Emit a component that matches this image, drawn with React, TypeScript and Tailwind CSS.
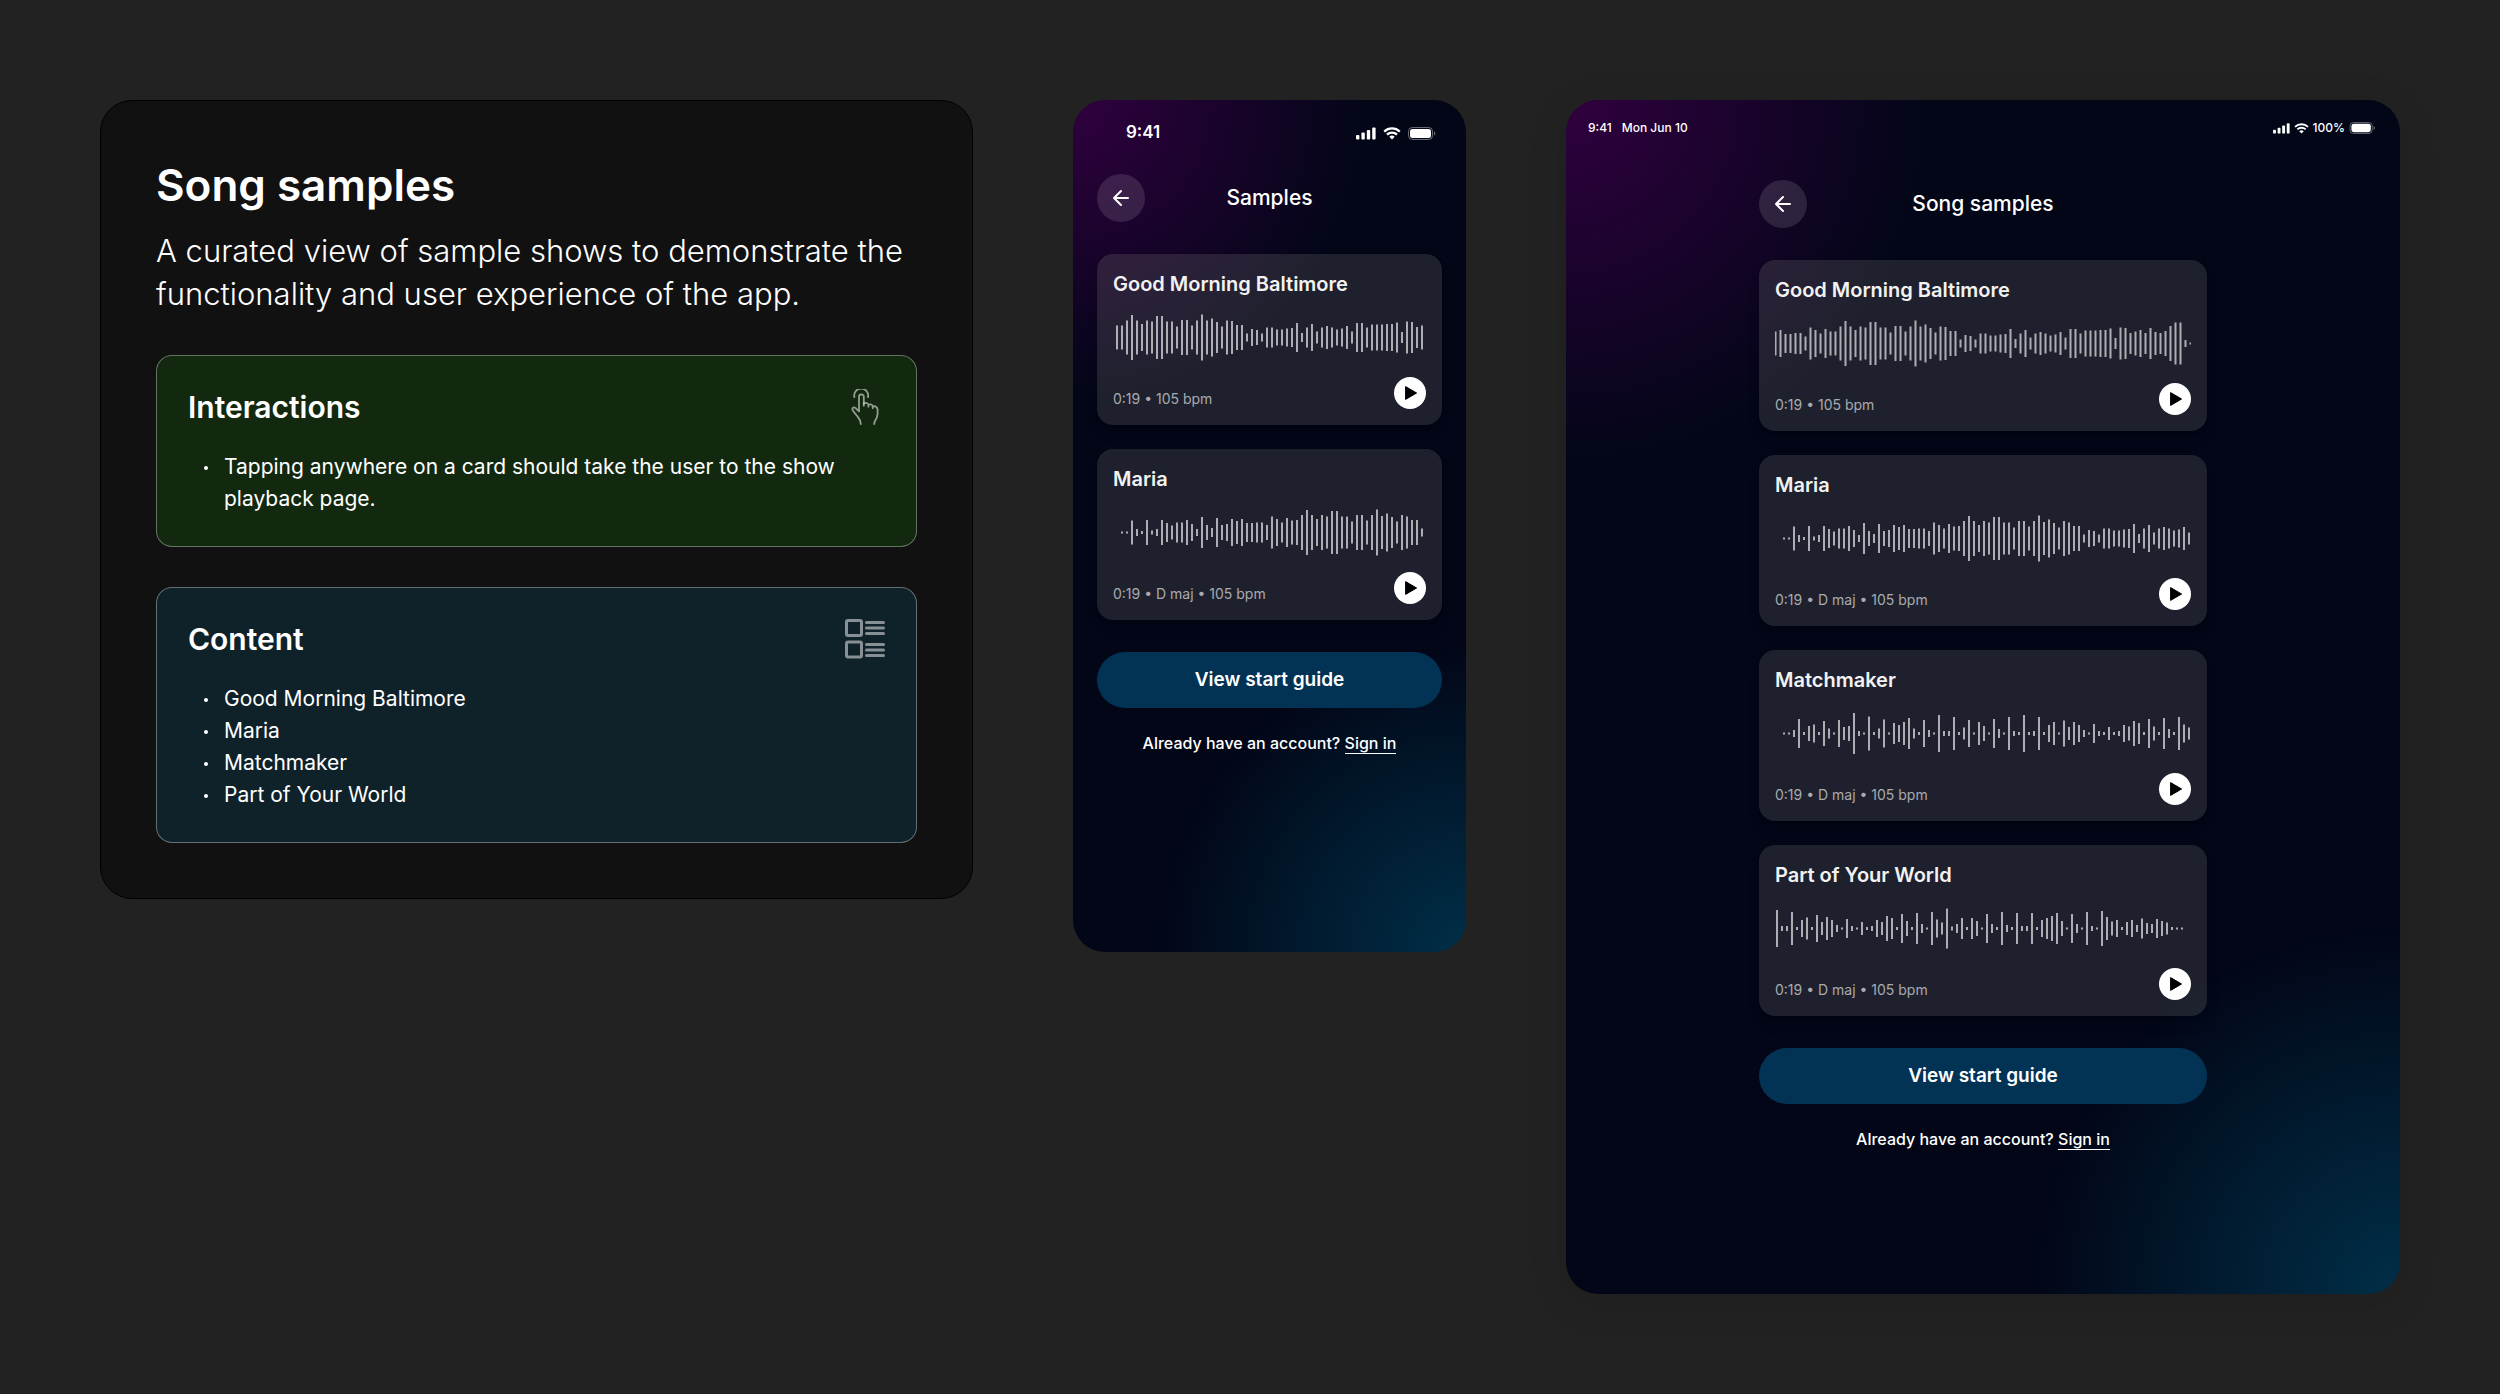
import React from "react";

const songs = [
  {
    title: "Good Morning Baltimore",
    meta: "0:19 • 105 bpm",
    start: 0.5,
    bars: [
      24, 27, 19, 19, 21, 21, 14, 32, 27, 20, 29, 24, 24, 34, 45, 34, 27, 34,
      32, 43, 43, 32, 32, 22, 35, 35, 24, 34, 46, 34, 38, 31, 22, 34, 33, 25,
      25, 8, 17, 15, 8, 20, 20, 16, 16, 18, 19, 29, 9, 20, 27, 12, 20, 23, 20,
      16, 18, 23, 12, 29, 29, 20, 26, 26, 26, 27, 27, 30, 11, 32, 31, 21, 24,
      27, 21, 31, 23, 21, 25, 35, 42, 42, 7, 2,
    ],
  },
  {
    title: "Maria",
    meta: "0:19 • D maj • 105 bpm",
    start: 9,
    bars: [
      2, 2, 24, 7, 3, 25, 4, 7, 25, 19, 14, 20, 20, 25, 17, 7, 31, 15, 9, 29,
      15, 17, 27, 23, 27, 19, 19, 20, 20, 15, 32, 27, 20, 29, 24, 25, 35, 45,
      35, 27, 35, 32, 43, 43, 32, 32, 22, 35, 35, 24, 35, 46, 33, 38, 31, 22,
      35, 32, 25, 25, 8, 17, 15, 8, 20, 20, 16, 16, 18, 19, 29, 9, 20, 27, 12,
      20, 23, 20, 16, 18, 23, 12,
    ],
  },
  {
    title: "Matchmaker",
    meta: "0:19 • D maj • 105 bpm",
    start: 9,
    bars: [
      2, 2, 7, 29, 3, 15, 18, 3, 25, 10, 2, 27, 13, 15, 41, 5, 2, 34, 3, 10,
      28, 2, 21, 17, 23, 31, 10, 3, 27, 7, 2, 37, 5, 5, 33, 3, 12, 27, 2, 23,
      15, 2, 29, 9, 2, 33, 5, 3, 37, 3, 5, 33, 3, 17, 23, 2, 26, 13, 23, 17, 7,
      2, 19, 5, 3, 13, 3, 5, 17, 14, 25, 21, 3, 29, 14, 3, 31, 9, 3, 33, 18, 12,
    ],
  },
  {
    title: "Part of Your World",
    meta: "0:19 • D maj • 105 bpm",
    start: 2,
    bars: [
      37, 5, 5, 33, 3, 17, 22, 3, 27, 13, 23, 17, 7, 2, 19, 5, 2, 13, 3, 5, 17,
      13, 25, 21, 3, 29, 15, 3, 31, 9, 2, 33, 18, 12, 40, 4, 9, 21, 3, 21, 15,
      2, 29, 9, 3, 33, 7, 3, 31, 5, 5, 31, 3, 17, 21, 25, 31, 15, 2, 29, 9, 2,
      33, 5, 2, 35, 23, 14, 17, 3, 13, 17, 7, 20, 11, 9, 19, 15, 12, 3, 2, 2,
    ],
  },
];

// the phone is narrower, so its first clip starts a little later
const phoneSongs = [
  { ...songs[0], start: 4, bars: songs[0].bars.slice(11, 73) },
  songs[1],
];

function Waveform({ bars, start }: any) {
  return (
    <svg className="block w-full h-[47px] overflow-hidden" aria-hidden="true">
      {bars.map((h: number, i: number) => (
        <rect
          key={i}
          x={start + i * 5 - 1}
          y={23.5 - h / 2}
          width="2"
          height={h}
          fill="#fff"
          fillOpacity="0.64"
        />
      ))}
    </svg>
  );
}

function SongCard({ song }: any) {
  return (
    <article className="flex flex-col gap-4 rounded-2xl bg-[#a0a098]/18 p-4 shadow-lg shadow-black/15">
      <h3 className="text-xl leading-7 font-semibold text-[#f2f2f2]">
        {song.title}
      </h3>
      <Waveform bars={song.bars} start={song.start} />
      <div className="flex items-end justify-between">
        <p className="text-sm leading-5 text-[#a9aaaf]">{song.meta}</p>
        <button
          aria-label={`Play ${song.title}`}
          className="flex size-8 items-center justify-center rounded-full bg-white"
        >
          <svg viewBox="0 0 32 32" className="size-8" aria-hidden="true">
            <path
              d="M11.600 9.600v12.800L22.600 16z"
              fill="#000"
              stroke="#000"
              strokeWidth="1"
              strokeLinejoin="round"
            />
          </svg>
        </button>
      </div>
    </article>
  );
}

function Header({ title }: any) {
  return (
    <header className="grid grid-cols-[48px_1fr_48px] items-center">
      <button
        aria-label="Back"
        className="flex size-12 items-center justify-center rounded-full bg-white/12"
      >
        <svg
          viewBox="0 0 24 24"
          className="size-6"
          fill="none"
          stroke="#fff"
          strokeWidth="2"
          strokeLinecap="round"
          strokeLinejoin="round"
          aria-hidden="true"
        >
          <path d="M19 12H5M12 5l-7 7 7 7" />
        </svg>
      </button>
      <h2 className="text-center text-[21px] leading-7 font-medium">{title}</h2>
    </header>
  );
}

function Samples({ title, items }: any) {
  return (
    <>
      <Header title={title} />
      <div className="mt-8 flex flex-col gap-6">
        {items.map((song: any) => (
          <SongCard key={song.title} song={song} />
        ))}
      </div>
      <button className="mt-8 h-14 w-full rounded-full bg-[#033354] text-[19px] font-semibold">
        View start guide
      </button>
      <p className="mt-[23px] text-center text-base leading-6 font-medium">
        Already have an account?{" "}
        <a href="#" className="border-b border-white">
          Sign in
        </a>
      </p>
    </>
  );
}

function Signal({ className }: any) {
  return (
    <svg viewBox="0 0 20 13" className={className} fill="#fff" aria-hidden="true">
      <rect x="0" y="8" width="3.4" height="4.5" rx="1" />
      <rect x="5.4" y="5.6" width="3.4" height="6.9" rx="1" />
      <rect x="10.8" y="3" width="3.4" height="9.5" rx="1" />
      <rect x="16.2" y="0.4" width="3.4" height="12.1" rx="1" />
    </svg>
  );
}

function Wifi({ className }: any) {
  return (
    <svg viewBox="0 0 18 13" className={className} aria-hidden="true">
      <g fill="none" stroke="#fff" strokeWidth="2.2">
        <path d="M1.2 4.6a11.2 11.2 0 0 1 15.600 0" />
        <path d="M4 7.600a7.200 7.200 0 0 1 10 0" />
      </g>
      <path d="M9 12.600 6.300 9.800a3.900 3.900 0 0 1 5.400 0z" fill="#fff" />
    </svg>
  );
}

function Battery({ className }: any) {
  return (
    <svg viewBox="0 0 28 13" className={className} aria-hidden="true">
      <rect
        x="0.5"
        y="0.5"
        width="24"
        height="12"
        rx="3.8"
        fill="none"
        stroke="#fff"
        strokeOpacity="0.4"
      />
      <rect x="2" y="2" width="21" height="9" rx="2.5" fill="#fff" />
      <path
        d="M26 4.400v4.200c.9-.4 1.400-1.200 1.400-2.100S26.900 4.800 26 4.400z"
        fill="#fff"
        fillOpacity="0.4"
      />
    </svg>
  );
}

function TapIcon() {
  return (
    <svg
      viewBox="0 0 28 36"
      className="mr-[6px] h-9 w-7"
      fill="none"
      stroke="#fff"
      strokeOpacity="0.55"
      strokeWidth="1.8"
      strokeLinecap="round"
      strokeLinejoin="round"
      aria-hidden="true"
    >
      <path d="M3.400 8.200a7 7 0 1 1 13.600 0" />
      <path d="M9.800 35c0-3-1-4.800-3-7.200-2-2.300-4-4.500-5.200-7-.8-1.900 1.200-3.200 2.800-1.900l3.600 3.400V7.800a2.400 2.400 0 0 1 4.800 0v9" />
      <path d="M12.800 14.600c2-1.500 4.600-.6 4.600 1.600v1.500M17.400 16c1.800-1.300 4.300-.5 4.300 1.600v1.600M21.700 17.600c2.500-1.100 4.700.6 4.900 3 .2 3 .2 5.600-.8 8-1 2-2.600 3.400-2.600 6.400" />
    </svg>
  );
}

function ListIcon() {
  return (
    <svg
      viewBox="0 0 40 40"
      className="size-10"
      fill="none"
      stroke="#fff"
      strokeOpacity="0.5"
      strokeWidth="3"
      strokeLinecap="round"
      aria-hidden="true"
    >
      <rect x="1.5" y="1.5" width="15" height="15" rx="1.5" />
      <rect x="1.5" y="23" width="15" height="15" rx="1.5" />
      <path d="M21.500 3.500h17M21.500 9h17M21.500 14.500h17M21.500 25.500h17M21.500 31h17M21.500 36.500h17" />
    </svg>
  );
}

function Note({ title, icon, items, className }: any) {
  return (
    <section className={`rounded-2xl border border-white/35 p-[31px] ${className}`}>
      <div className="flex h-10 items-center justify-between">
        <h2 className="text-3xl leading-10 font-semibold">{title}</h2>
        {icon}
      </div>
      <ul className="mt-6 text-[21px] leading-8">
        {items.map((item: string) => (
          <li key={item} className="flex gap-4 pl-4">
            <span className="mt-[15px] size-1 shrink-0 rounded-full bg-white" />
            {item}
          </li>
        ))}
      </ul>
    </section>
  );
}

function App() {
  return (
    <main className="flex min-h-screen items-start gap-[100px] bg-[#222] p-[100px] font-['Inter',sans-serif] text-white">
      {/* notes */}
      <section className="min-w-0 flex-1 rounded-[32px] border border-black bg-[#111] p-[55px]">
        <h1 className="text-[44px] leading-[58px] font-semibold">
          Song samples
        </h1>
        <p className="mt-[15px] text-[31px] leading-[43px] font-light">
          A curated view of sample shows to demonstrate the functionality and
          user experience of the app.
        </p>
        <div className="mt-10 flex flex-col gap-10">
          <Note
            title="Interactions"
            icon={<TapIcon />}
            className="bg-[#12290f]"
            items={[
              "Tapping anywhere on a card should take the user to the show playback page.",
            ]}
          />
          <Note
            title="Content"
            icon={<ListIcon />}
            className="bg-[#0f222a]"
            items={songs.map((song) => song.title)}
          />
        </div>
      </section>

      {/* phone */}
      <section className="min-h-[852px] w-[393px] shrink-0 rounded-[32px] bg-[#020617] bg-[radial-gradient(circle_at_0%_0%,#30003f_0px,transparent_300px),radial-gradient(circle_at_100%_100%,#002f48_0px,transparent_310px)] px-6 pb-12">
        <div className="flex h-[66px] items-center justify-between pr-[6px] pl-[29px]">
          <span className="text-[17px] font-semibold">9:41</span>
          <div className="flex items-center gap-[7px]">
            <Signal className="h-[13px] w-5" />
            <Wifi className="h-[13px] w-[18px]" />
            <Battery className="h-[13px] w-7" />
          </div>
        </div>
        <div className="pt-2">
          <Samples title="Samples" items={phoneSongs} />
        </div>
      </section>

      {/* tablet */}
      <section className="min-h-[1194px] w-[834px] shrink-0 rounded-[32px] bg-[#020617] bg-[radial-gradient(circle_at_0%_0%,#30003f_0px,transparent_370px),radial-gradient(circle_at_100%_100%,#002f48_0px,transparent_370px)] pb-12 shadow-[0_8px_40px_#0000001a]">
        <div className="flex h-14 items-center justify-between pr-6 pl-[22px] text-xs font-medium">
          <div className="flex gap-[10px]">
            <span>9:41</span>
            <span>Mon Jun 10</span>
          </div>
          <div className="flex items-center gap-1">
            <Signal className="h-[11px] w-[17px]" />
            <Wifi className="h-[11px] w-[15px]" />
            <span>100%</span>
            <Battery className="h-3 w-[27px]" />
          </div>
        </div>
        <div className="mx-auto max-w-[448px] pt-6">
          <Samples title="Song samples" items={songs} />
        </div>
      </section>
    </main>
  );
}

export default App;
